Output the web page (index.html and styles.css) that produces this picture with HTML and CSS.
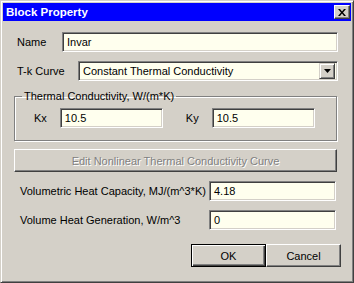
FILE: index.html
```html
<!DOCTYPE html>
<html lang="en">
<head>
  <meta charset="UTF-8" />
  <title>Block Property</title>
  <link rel="stylesheet" href="styles.css">
</head>
<body>

  <div class="window">
    <div class="titlebar">
      <span class="title">Block Property</span>
      <span class="close">
        <svg width="8" height="7" viewBox="0 0 8 7"><path d="M0 0h2l2 2.5 2-2.5h2l-3 3.5 3 3.5h-2l-2-2.5-2 2.5h-2l3-3.5z" fill="#000"/></svg>
      </span>
    </div>

    <div class="content">
      <div class="row name-row">
        <label>Name</label>
        <div class="field name-field">Invar</div>
      </div>

      <div class="row curve-row">
        <label>T-k Curve</label>
        <div class="field combo">
          <span>Constant Thermal Conductivity</span>
          <span class="arrow">
            <svg width="7" height="4" viewBox="0 0 7 4"><path d="M0 0h7l-3.5 4z" fill="#000"/></svg>
          </span>
        </div>
      </div>

      <fieldset class="group">
        <legend>Thermal Conductivity, W/(m*K)</legend>
        <div class="k-row">
          <label>Kx</label>
          <div class="field k-field">10.5</div>
          <label class="ky">Ky</label>
          <div class="field k-field">10.5</div>
        </div>
      </fieldset>

      <div class="btn edit-btn">Edit Nonlinear Thermal Conductivity Curve</div>

      <div class="row prop-row">
        <label>Volumetric Heat Capacity, MJ/(m^3*K)</label>
        <div class="field prop-field">4.18</div>
      </div>

      <div class="row prop-row">
        <label>Volume Heat Generation, W/m^3</label>
        <div class="field prop-field">0</div>
      </div>

      <div class="actions">
        <div class="btn ok-btn">OK</div>
        <div class="btn">Cancel</div>
      </div>
    </div>
  </div>

</body>
</html>
```

FILE: styles.css
```css
* {
  box-sizing: border-box;
  margin: 0;
  padding: 0;
}

body {
  font-family: "Liberation Sans", Arial, sans-serif;
  font-size: 11px;
  color: #000;
  background-color: #d4d0c8;
  width: 354px;
  height: 283px;
  overflow: hidden;
}

.window {
  width: 354px;
  height: 283px;
  background-color: #d4d0c8;
  border-top: 1px solid #d4d0c8;
  border-left: 1px solid #d4d0c8;
  border-right: 1px solid #404040;
  border-bottom: 1px solid #404040;
  box-shadow: inset 1px 1px 0 #fff, inset -1px -1px 0 #808080;
  padding: 2px;
}

.titlebar {
  height: 18px;
  background-color: #0000ff;
  display: flex;
  align-items: center;
  justify-content: space-between;
  padding: 0 1px 0 3px;
}

.title {
  color: #fff;
  font-weight: bold;
  font-size: 11.5px;
}

.close {
  width: 16px;
  height: 14px;
  background-color: #d4d0c8;
  border-top: 1px solid #fff;
  border-left: 1px solid #fff;
  border-right: 1px solid #404040;
  border-bottom: 1px solid #404040;
  box-shadow: inset -1px -1px 0 #808080;
  display: flex;
  align-items: center;
  justify-content: center;
}

.content {
  padding: 11px 13px 0 8px;
}

.row {
  display: flex;
  align-items: center;
}

.row label {
  padding-left: 6px;
}

.field {
  height: 20px;
  background-color: #ffffee;
  border-top: 1px solid #808080;
  border-left: 1px solid #808080;
  border-right: 1px solid #fff;
  border-bottom: 1px solid #fff;
  box-shadow: inset 1px 1px 0 #404040, inset -1px -1px 0 #d4d0c8;
  padding: 2px 4px 0;
  line-height: 15px;
}

.name-field {
  margin-left: auto;
  width: 276px;
}

.curve-row {
  margin-top: 9px;
}

.combo {
  margin-left: auto;
  width: 260px;
  display: flex;
  justify-content: space-between;
  padding-right: 2px;
}

.arrow {
  width: 16px;
  height: 16px;
  margin-top: -1px;
  background-color: #d4d0c8;
  border-top: 1px solid #d4d0c8;
  border-left: 1px solid #d4d0c8;
  border-right: 1px solid #404040;
  border-bottom: 1px solid #404040;
  box-shadow: inset 1px 1px 0 #fff, inset -1px -1px 0 #808080;
  display: flex;
  align-items: center;
  justify-content: center;
}

.group {
  margin: 9px 1px 0 3px;
  height: 51px;
  border: 1px solid #808080;
  box-shadow: 1px 1px 0 #fff, inset 1px 1px 0 #fff;
  padding: 6px 0 0 19px;
}

.group legend {
  padding: 0 2px;
  margin-left: -12px;
}

.k-row {
  display: flex;
  align-items: center;
}

.k-field {
  width: 103px;
  margin-left: 13px;
}

.ky {
  margin-left: 23px;
}

.btn {
  height: 23px;
  display: flex;
  align-items: center;
  justify-content: center;
  background-color: #d4d0c8;
  border-top: 1px solid #fff;
  border-left: 1px solid #fff;
  border-right: 1px solid #404040;
  border-bottom: 1px solid #404040;
  box-shadow: inset -1px -1px 0 #808080;
}

.edit-btn {
  margin: 8px 1px 0 3px;
  color: #808080;
  text-shadow: 1px 1px 0 #fff;
}

.prop-row {
  margin-top: 9px;
  margin-right: 2px;
}

.prop-row label {
  padding-left: 9px;
}

.prop-row:nth-of-type(3) {
  margin-top: 10px;
}

.prop-field {
  margin-left: auto;
  width: 127px;
}

.actions {
  display: flex;
  justify-content: flex-end;
  margin-top: 14px;
  margin-right: -3px;
}

.actions .btn {
  width: 75px;
}

.ok-btn {
  border: 1px solid #000;
  box-shadow: inset 1px 1px 0 #fff, inset -1px -1px 0 #404040, inset -2px -2px 0 #808080;
}
```
